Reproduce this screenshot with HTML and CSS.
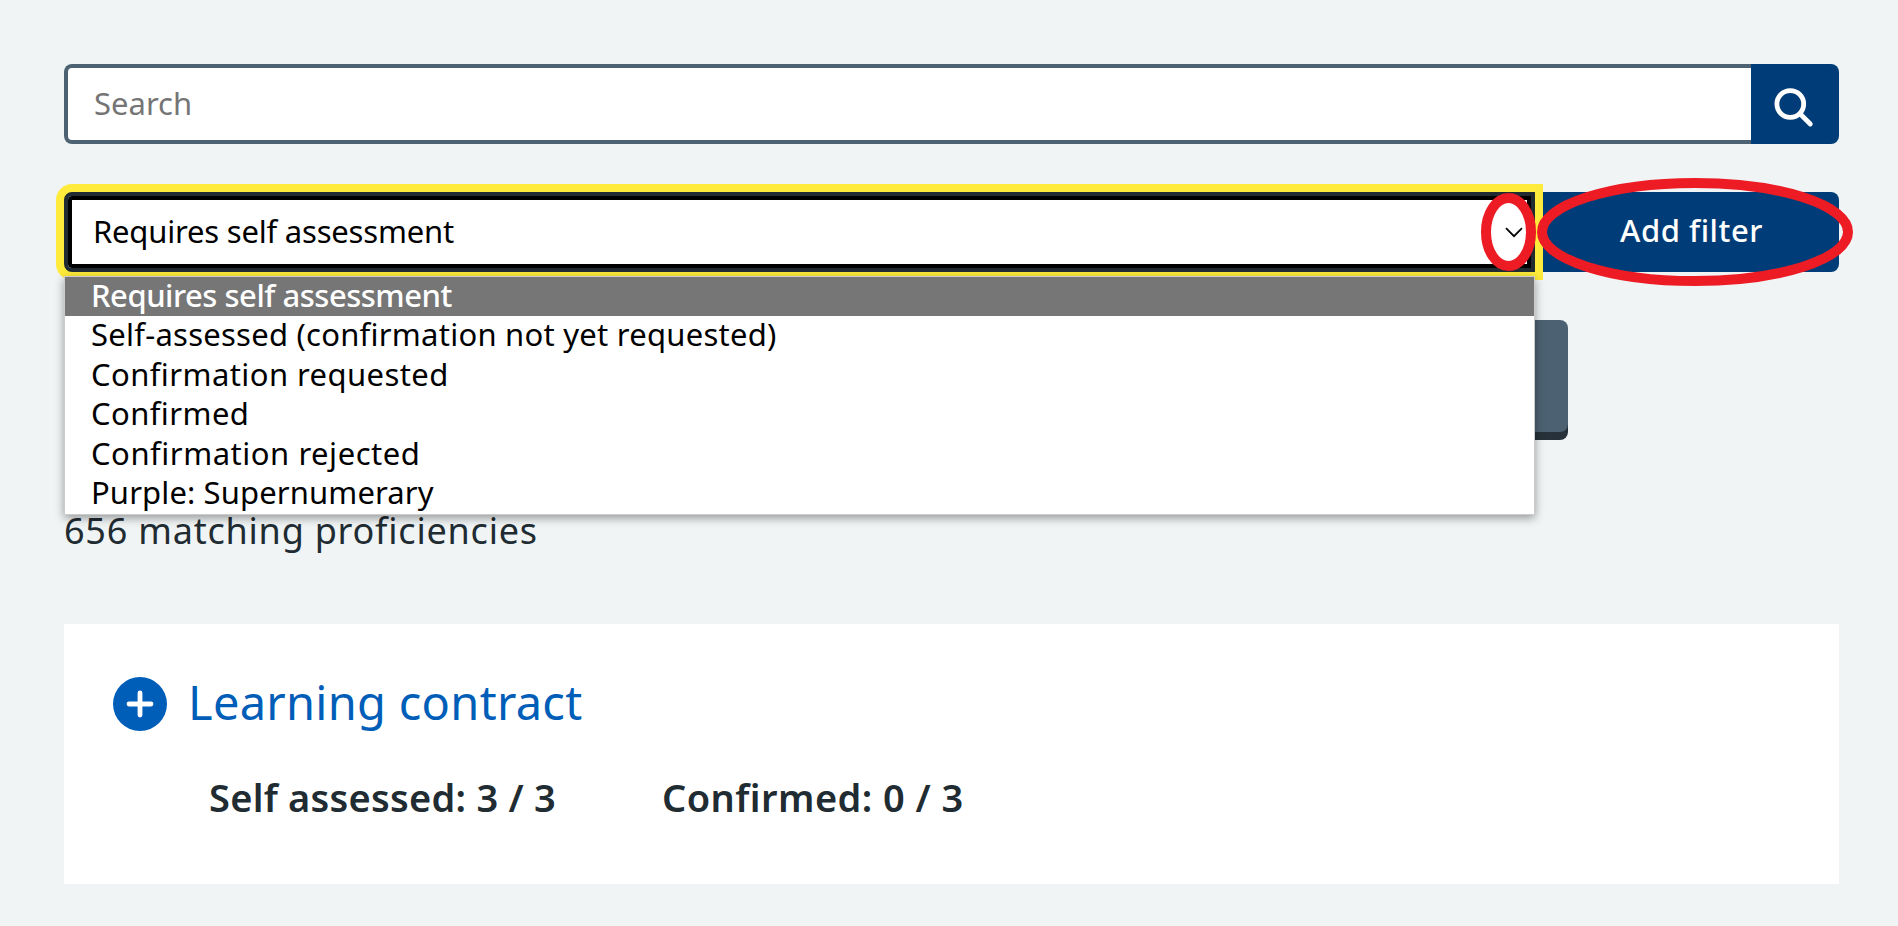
FILE: index.html
```html
<!DOCTYPE html>
<html lang="en">
<head>
<meta charset="utf-8">
<title>Proficiencies</title>
<link rel="stylesheet" href="styles.css">
</head>
<body>
<main class="page">
  <div class="search">
    <div class="search-input">Search</div>
    <button class="search-button" aria-label="Search">
      <svg width="88" height="80" viewBox="0 0 88 80" fill="none" stroke="#fff" stroke-width="4.8" stroke-linecap="round"><circle cx="39.3" cy="40" r="13.4"/><path d="M50 50.8 59.3 60"/></svg>
    </button>
  </div>

  <div class="filter">
    <div class="select">
      <div class="select-value">Requires self assessment</div>
      <svg class="chevron" width="18" height="11" viewBox="0 0 18 11" fill="none" stroke="#000" stroke-width="1.7"><path d="M1 1.2 9 9.2 17 1.2"/></svg>
      <ul class="options">
        <li class="option selected">Requires self assessment</li>
        <li class="option slightly-wide">Self-assessed (confirmation not yet requested)</li>
        <li class="option wide">Confirmation requested</li>
        <li class="option wide">Confirmed</li>
        <li class="option wider">Confirmation rejected</li>
        <li class="option narrow">Purple: Supernumerary</li>
      </ul>
      <svg class="ring ring-small" width="55" height="78" viewBox="0 0 55 78"><ellipse cx="27.5" cy="39" rx="22.5" ry="34"/></svg>
    </div>
    <button class="add-button">Add filter
      <svg class="ring ring-large" width="316" height="108" viewBox="0 0 316 108"><ellipse cx="158" cy="54" rx="153" ry="49"/></svg>
    </button>
  </div>

  <div class="action"></div>

  <p class="count">656 matching proficiencies</p>

  <section class="card">
    <h2 class="card-title">
      <svg width="54" height="54" viewBox="0 0 54 54"><circle cx="27" cy="27" r="27" fill="#005eb8"/><path d="M27 16v22M16 27h22" stroke="#fff" stroke-width="4.8" stroke-linecap="round"/></svg>
      <span>Learning contract</span>
    </h2>
    <div class="stats">
      <span class="assessed">Self assessed: 3 / 3</span>
      <span class="confirmed">Confirmed: 0 / 3</span>
    </div>
  </section>
</main>
</body>
</html>
```
FILE: styles.css
```css
* { box-sizing: border-box; }
body {
  margin: 0;
  background: #f0f4f5;
  color: #212b32;
  font-family: "Noto Sans", "Open Sans", sans-serif;
  font-size: 31px;
}
.page { padding: 64px 59px 0 64px; height: 926px; overflow: hidden; }
button { border: 0; padding: 0; background: #003d78; color: #fff; font: inherit; border-radius: 0 8px 8px 0; }
svg { display: block; }

.search { display: flex; height: 80px; }
.search-input {
  flex: 1;
  border: 4px solid #4c6272;
  border-right: 0;
  border-radius: 8px 0 0 8px;
  background: #fff;
  color: #757575;
  padding-left: 26px;
  line-height: 70px;
}
.search-button { width: 88px; }

.filter { display: flex; height: 80px; margin-top: 48px; }
.select {
  position: relative;
  z-index: 1;
  width: 1471px;
  border: 4px solid #212b32;
  border-radius: 8px 0 0 8px;
  background: #fff;
  box-shadow: inset 0 0 0 4px #000, 0 0 0 8px #ffeb3b;
  color: #000;
}
.select-value { padding-left: 25px; line-height: 70px; letter-spacing: -.2px; }
.chevron { position: absolute; right: 8px; top: 31px; }
.options {
  position: absolute;
  left: -4px;
  top: 80px;
  width: 1471px;
  height: 239px;
  margin: 0;
  padding: 0;
  list-style: none;
  background: #fff;
  border: 1px solid #ccc;
  box-shadow: 0 3px 9px rgba(0, 0, 0, .38);
}
.option { height: 39.4px; padding-left: 26px; line-height: 36px; white-space: nowrap; }
.selected { background: #767676; color: #fff; font-weight: 500; letter-spacing: -.48px; }
.slightly-wide { letter-spacing: .25px; }
.wide { letter-spacing: .42px; }
.wider { letter-spacing: .53px; }
.narrow { letter-spacing: .12px; }

.add-button { position: relative; z-index: 2; flex: 1; background: none; font-weight: 500; letter-spacing: .55px; line-height: 77px; padding: 0 0 3px 9px; }
.add-button::before { content: ""; position: absolute; z-index: -1; inset: 0 0 0 8px; background: #003d78; border-radius: 0 8px 8px 0; }
.ring { position: absolute; fill: none; stroke: #ed1c24; stroke-width: 10; pointer-events: none; }
.ring-small { right: -5px; top: -3px; }
.ring-large { left: 2px; top: -14px; }

.action { width: 1504px; height: 112px; margin-top: 48px; border-radius: 8px; background: #4c6272; box-shadow: 0 8px 0 #263139; }
.count { margin: 75px 0 0; font-size: 36px; line-height: 48px; letter-spacing: .78px; }

.card { height: 260px; margin-top: 69px; padding: 50px 0 0 49px; background: #fff; }
.card-title { display: flex; gap: 21px; align-items: center; height: 60px; margin: 0; color: #005eb8; font-size: 47px; font-weight: 400; letter-spacing: .28px; }
.card-title span { line-height: 56px; padding-bottom: 4px; }
.stats { display: flex; margin: 36px 0 0 96px; font-size: 38px; font-weight: 600; line-height: 54px; }
.assessed { width: 453px; letter-spacing: .25px; }
.confirmed { letter-spacing: .45px; }
```
